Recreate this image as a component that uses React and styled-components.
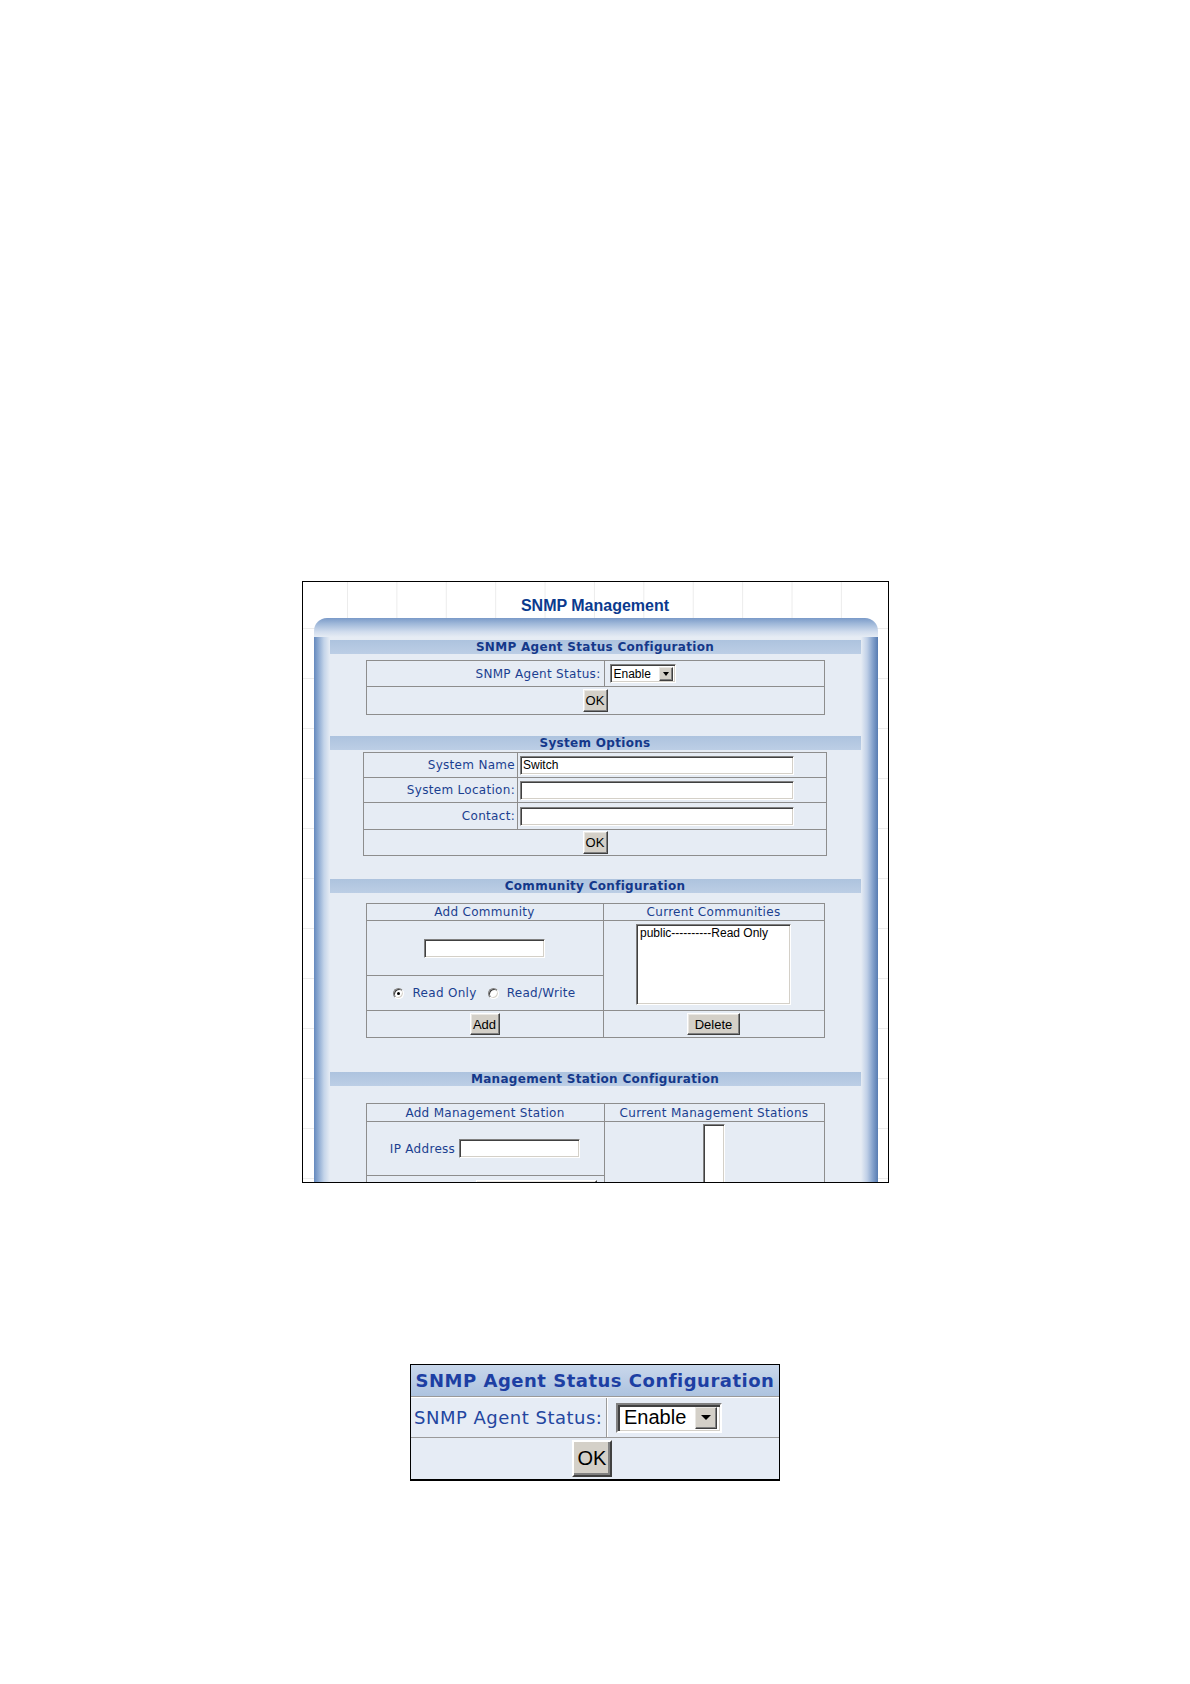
import React from "react";
import styled, { createGlobalStyle } from "styled-components";

const GlobalStyle = createGlobalStyle`
  html, body {
    margin: 0;
    padding: 0;
    background: #fff;
  }
  body {
    font-family: "DejaVu Sans", Verdana, sans-serif;
  }
`;

const Page = styled.div`
  width: 1190px;
  min-height: 1684px;
  box-sizing: border-box;
  padding-top: 581px;
  display: flex;
  flex-direction: column;
  align-items: center;
`;

const Window = styled.div`
  width: 587px;
  height: 602px;
  box-sizing: border-box;
  border: 1px solid #000;
  overflow: hidden;
  display: flex;
  flex-direction: column;
  background-color: #fff;
  background-image: linear-gradient(to right, #ececec 1px, transparent 1px),
    linear-gradient(to bottom, #ececec 1px, transparent 1px);
  background-size: 49.4px 50px;
  background-position: 44px 46px;
`;

const Title = styled.h1`
  margin: 0;
  height: 36px;
  flex: none;
  box-sizing: border-box;
  padding-top: 14px;
  text-align: center;
  font: bold 16px/20px "Liberation Sans", Arial, sans-serif;
  color: #0b3a8e;
`;

const Frame = styled.div`
  flex: 1;
  margin: 0 10px 0 11px;
  border-radius: 13px 13px 0 0;
  overflow: hidden;
  display: flex;
  flex-direction: column;
`;

const Cap = styled.div`
  height: 19px;
  flex: none;
  background: linear-gradient(
    to bottom,
    #7a9ac8 0%,
    #9fb8d9 30%,
    #d0dced 72%,
    #e6ecf4 100%
  );
`;

const FrameBody = styled.div`
  flex: 1;
  padding: 3px 17px 0 16px;
  display: flex;
  flex-direction: column;
  background: linear-gradient(
        to right,
        #6589bd 0,
        #89a7d0 4px,
        #c4d4e9 10px,
        #e6ecf4 16px
      )
      left top / 16px 100% no-repeat,
    linear-gradient(
        to left,
        #577cb2 0,
        #82a0cb 5px,
        #c0d0e7 11px,
        #e6ecf4 17px
      )
      right top / 17px 100% no-repeat,
    #e6ecf4;
`;

const SectionBar = styled.div`
  flex: none;
  height: 14px;
  margin-top: ${(p) => p.$top || 0}px;
  background: linear-gradient(to bottom, #adc3de, #bccee5);
  text-align: center;
  font: bold 12px/14px "DejaVu Sans", Verdana, sans-serif;
  letter-spacing: 0.3px;
  color: #14388a;
  white-space: nowrap;
`;

const Grid = styled.div`
  flex: none;
  display: grid;
  grid-template-columns: ${(p) => p.$cols};
  grid-template-rows: ${(p) => p.$rows};
  gap: 1px;
  padding: 1px;
  width: ${(p) => p.$width}px;
  box-sizing: border-box;
  margin: ${(p) => p.$top}px auto 0;
  background: #8d8d8d;
`;

const Cell = styled.div`
  background: #e6ecf4;
  display: flex;
  align-items: ${(p) => p.$valign || "center"};
  justify-content: ${(p) => p.$align || "center"};
  padding: ${(p) => p.$pad || "0"};
  grid-column: span ${(p) => p.$span || 1};
  grid-row: span ${(p) => p.$rowSpan || 1};
  gap: ${(p) => p.$gap || 0}px;
  font: 12px "DejaVu Sans", Verdana, sans-serif;
  letter-spacing: 0.3px;
  color: #1b3f90;
  white-space: nowrap;
  min-width: 0;
  overflow: hidden;
`;

const Button = styled.button`
  width: ${(p) => p.$w}px;
  height: ${(p) => p.$h || 23}px;
  margin: 0;
  padding: 0;
  box-sizing: border-box;
  background: #d4d0c8;
  border: 1px solid;
  border-color: #fff #404040 #404040 #fff;
  box-shadow: inset -1px -1px 0 #808080, inset 1px 1px 0 #e9e7e3;
  font: 13px "Liberation Sans Narrow", "Liberation Sans", Arial, sans-serif;
  letter-spacing: 0;
  color: #000;
`;

const Select = styled.div`
  width: 66px;
  height: 19px;
  margin-left: 1px;
  box-sizing: border-box;
  border: 1px solid;
  border-color: #808080 #fff #fff #808080;
  box-shadow: inset 1px 1px 0 #404040, inset -1px -1px 0 #d4d0c8;
  background: #fff;
  display: flex;
  align-items: center;
  justify-content: space-between;
  padding: 0 2px 0 3px;
  font: 12px "Liberation Sans", Arial, sans-serif;
  letter-spacing: 0;
  color: #000;
`;

const Arrow = styled.span`
  width: ${(p) => p.$size || 14}px;
  height: ${(p) => p.$size || 14}px;
  box-sizing: border-box;
  background: #d4d0c8;
  border: 1px solid;
  border-color: #e9e7e3 #404040 #404040 #e9e7e3;
  box-shadow: inset -1px -1px 0 #808080;
  display: flex;
  align-items: center;
  justify-content: center;
  &::after {
    content: "";
    border-style: solid;
    border-color: #000 transparent transparent transparent;
    border-width: ${(p) => (p.$size > 18 ? "5px 5px 0 5px" : "4px 3.5px 0 3.5px")};
  }
`;

const TextInput = styled.input`
  width: ${(p) => p.$w}px;
  height: 19px;
  flex: none;
  box-sizing: border-box;
  margin: 0;
  padding: 0 2px;
  border: 1px solid;
  border-color: #808080 #fff #fff #808080;
  box-shadow: inset 1px 1px 0 #404040, inset -1px -1px 0 #d4d0c8;
  background: #fff;
  font: 12px "Liberation Sans", Arial, sans-serif;
  letter-spacing: 0;
  color: #000;
  outline: none;
`;

const ListBox = styled.div`
  width: ${(p) => p.$w}px;
  height: ${(p) => p.$h}px;
  box-sizing: border-box;
  border: 1px solid;
  border-color: #808080 #fff #fff #808080;
  box-shadow: inset 1px 1px 0 #404040, inset -1px -1px 0 #d4d0c8;
  background: #fff;
  padding: 1px 3px;
  font: 12px/15px "Liberation Sans", Arial, sans-serif;
  letter-spacing: 0;
  color: #000;
`;

const RadioLabel = styled.label`
  display: inline-flex;
  align-items: center;
  gap: 8px;
`;

const RadioMark = styled.span`
  width: 11px;
  height: 11px;
  box-sizing: border-box;
  border-radius: 50%;
  border: 1px solid;
  border-color: #808080 #fff #fff #808080;
  box-shadow: inset 1px 1px 0 #404040, inset -1px -1px 0 #d4d0c8;
  background: #fff;
  position: relative;
  &::after {
    content: "";
    display: ${(p) => (p.$checked ? "block" : "none")};
    position: absolute;
    left: 3px;
    top: 3px;
    width: 3px;
    height: 3px;
    border-radius: 50%;
    background: #000;
  }
`;

/* the enlarged crop below the window */
const Zoomed = styled.div`
  margin-top: 181px;
  width: 370px;
  box-sizing: border-box;
  border: 1px solid #000;
  border-bottom-width: 2px;
  background: #e6ecf5;
  overflow: hidden;
`;

const ZoomHeader = styled.div`
  height: 31px;
  text-align: center;
  font: bold 18px/31px "DejaVu Sans", Verdana, sans-serif;
  letter-spacing: 0.5px;
  color: #1d3fa3;
  background: linear-gradient(to bottom, #c9d7eb, #adc3df);
  border-bottom: 1px solid #9a9a9a;
  box-shadow: 0 1px 0 #fff;
  white-space: nowrap;
`;

const ZoomRow = styled.div`
  display: flex;
  align-items: center;
  height: ${(p) => p.$h}px;
  border-top: ${(p) => (p.$line ? "1px solid #9a9a9a" : "none")};
  margin-top: ${(p) => (p.$first ? 1 : 0)}px;
`;

const ZoomLabel = styled.div`
  width: 196px;
  height: 100%;
  box-sizing: border-box;
  padding-left: 3px;
  display: flex;
  align-items: center;
  border-right: 1px solid #9a9a9a;
  box-shadow: 1px 0 0 #fff;
  font: 18px "DejaVu Sans", Verdana, sans-serif;
  letter-spacing: 0.5px;
  color: #2346a0;
  white-space: nowrap;
`;

const ZoomSelect = styled.div`
  margin-left: 9px;
  width: 106px;
  height: 30px;
  box-sizing: border-box;
  border: 2px solid;
  border-color: #808080 #fff #fff #808080;
  box-shadow: inset 2px 2px 0 #404040, inset -1px -1px 0 #d4d0c8;
  background: #fff;
  display: flex;
  align-items: center;
  justify-content: space-between;
  padding: 0 3px 0 6px;
  font: 20px "Liberation Sans", Arial, sans-serif;
  color: #000;
`;

const ZoomButton = styled(Button)`
  margin-left: 161px;
  font-size: 20px;
  font-family: "Liberation Sans", Arial, sans-serif;
  border-width: 2px;
  box-shadow: inset -2px -2px 0 #808080;
`;

export default function App() {
  return (
    <Page>
      <GlobalStyle />
      <Window>
        <Title>SNMP Management</Title>
        <Frame>
          <Cap />
          <FrameBody>
            <SectionBar>SNMP Agent Status Configuration</SectionBar>
            <Grid $width={459} $cols="237px 219px" $rows="25px 27px" $top={6}>
              <Cell $align="flex-end" $pad="0 3px 0 0">
                SNMP Agent Status:
              </Cell>
              <Cell $align="flex-start" $pad="0 0 0 4px">
                <Select>
                  Enable
                  <Arrow />
                </Select>
              </Cell>
              <Cell $span={2}>
                <Button $w={25}>OK</Button>
              </Cell>
            </Grid>

            <SectionBar $top={21}>System Options</SectionBar>
            <Grid
              $width={464}
              $cols="153px 308px"
              $rows="24px 24px 26px 25px"
              $top={2}
            >
              <Cell $align="flex-end" $pad="0 2px 0 0">
                System Name
              </Cell>
              <Cell $align="flex-start" $pad="0 0 0 2px">
                <TextInput $w={274} defaultValue="Switch" readOnly />
              </Cell>
              <Cell $align="flex-end" $pad="0 2px 0 0">
                System Location:
              </Cell>
              <Cell $align="flex-start" $pad="0 0 0 2px">
                <TextInput $w={274} readOnly />
              </Cell>
              <Cell $align="flex-end" $pad="0 2px 0 0">
                Contact:
              </Cell>
              <Cell $align="flex-start" $pad="0 0 0 2px">
                <TextInput $w={274} readOnly />
              </Cell>
              <Cell $span={2}>
                <Button $w={25}>OK</Button>
              </Cell>
            </Grid>

            <SectionBar $top={23}>Community Configuration</SectionBar>
            <Grid
              $width={459}
              $cols="236px 220px"
              $rows="16px 54px 34px 26px"
              $top={10}
            >
              <Cell>Add Community</Cell>
              <Cell>Current Communities</Cell>
              <Cell>
                <TextInput $w={121} readOnly />
              </Cell>
              <Cell $rowSpan={2} $valign="flex-start" $pad="3px 0 0 0">
                <ListBox $w={155} $h={81}>
                  public----------Read Only
                </ListBox>
              </Cell>
              <Cell $gap={11}>
                <RadioLabel>
                  <RadioMark $checked />
                  Read Only
                </RadioLabel>
                <RadioLabel>
                  <RadioMark />
                  Read/Write
                </RadioLabel>
              </Cell>
              <Cell>
                <Button $w={30} $h={22}>
                  Add
                </Button>
              </Cell>
              <Cell>
                <Button $w={53} $h={22}>
                  Delete
                </Button>
              </Cell>
            </Grid>

            <SectionBar $top={34}>Management Station Configuration</SectionBar>
            <Grid
              $width={459}
              $cols="237px 219px"
              $rows="17px 53px 60px"
              $top={17}
            >
              <Cell>Add Management Station</Cell>
              <Cell>Current Management Stations</Cell>
              <Cell $gap={4}>
                IP Address
                <TextInput $w={121} readOnly />
              </Cell>
              <Cell $rowSpan={2} $valign="flex-start" $pad="2px 0 0 0">
                <ListBox $w={22} $h={100} />
              </Cell>
              <Cell $align="flex-start" $valign="flex-start" $pad="4px 0 0 109px">
                <Button $w={121} $h={22} />
              </Cell>
            </Grid>
          </FrameBody>
        </Frame>
      </Window>

      <Zoomed>
        <ZoomHeader>SNMP Agent Status Configuration</ZoomHeader>
        <ZoomRow $h={39} $first>
          <ZoomLabel>SNMP Agent Status:</ZoomLabel>
          <ZoomSelect>
            Enable
            <Arrow $size={22} />
          </ZoomSelect>
        </ZoomRow>
        <ZoomRow $h={41} $line>
          <ZoomButton $w={40} $h={37}>
            OK
          </ZoomButton>
        </ZoomRow>
      </Zoomed>
    </Page>
  );
}
